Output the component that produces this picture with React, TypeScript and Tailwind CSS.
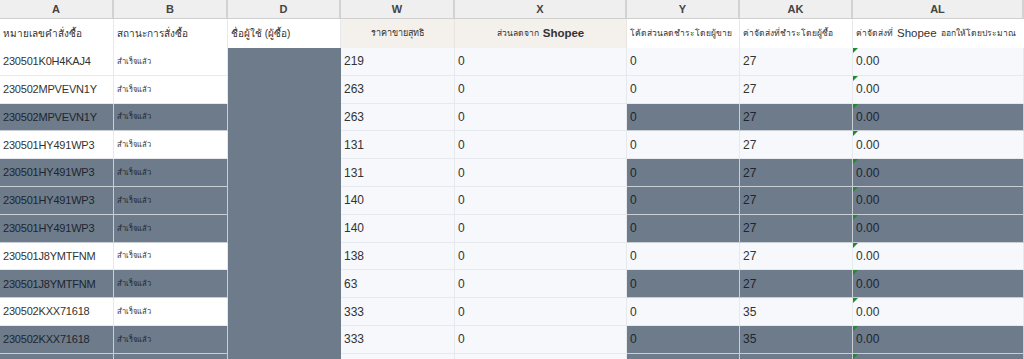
import React from "react";

type Row = {
  id: string;
  price: string;
  ship: string;
  dark: boolean;
};

const ROWS: Row[] = [
  { id: "230501K0H4KAJ4", price: "219", ship: "27", dark: false },
  { id: "230502MPVEVN1Y", price: "263", ship: "27", dark: false },
  { id: "230502MPVEVN1Y", price: "263", ship: "27", dark: true },
  { id: "230501HY491WP3", price: "131", ship: "27", dark: false },
  { id: "230501HY491WP3", price: "131", ship: "27", dark: true },
  { id: "230501HY491WP3", price: "140", ship: "27", dark: true },
  { id: "230501HY491WP3", price: "140", ship: "27", dark: true },
  { id: "230501J8YMTFNM", price: "138", ship: "27", dark: false },
  { id: "230501J8YMTFNM", price: "63", ship: "27", dark: true },
  { id: "230502KXX71618", price: "333", ship: "35", dark: false },
  { id: "230502KXX71618", price: "333", ship: "35", dark: true },
  { id: "", price: "", ship: "", dark: true },
];

const COLS = ["A", "B", "D", "W", "X", "Y", "AK", "AL"];

const grid =
  "grid grid-cols-[114px_114px_113px_114px_172px_113px_113px_171px]";

function Cell({
  dark,
  children,
  className = "",
  light = "bg-[#f6f8fb]",
  flag = false,
}: {
  dark: boolean;
  children?: React.ReactNode;
  className?: string;
  light?: string;
  flag?: boolean;
}) {
  return (
    <div
      className={[
        "relative flex h-[27.8px] items-center overflow-hidden whitespace-nowrap pl-[3px]",
        dark
          ? "border-r border-b border-[#c9ced4] bg-[#6d7b8a] text-[#1e2530]"
          : `border-r border-b border-[#e6eaee] text-[#333] ${light}`,
        className,
      ].join(" ")}
    >
      {flag ? (
        <span className="absolute top-0 left-0 h-0 w-0 border-t-[5px] border-r-[5px] border-t-[#1f8a2e] border-r-transparent" />
      ) : null}
      {children}
    </div>
  );
}

export default function App() {
  return (
    <div className="h-[359px] w-[1024px] overflow-hidden bg-white font-['Liberation_Sans','Noto_Sans',sans-serif]">
      <div className={`${grid} h-[19px] border-b border-[#cfcfcf] bg-[#efefef]`}>
        {COLS.map((c) => (
          <div
            key={c}
            className="flex items-center justify-center border-r-2 border-double border-[#d2d2d2] text-[11px] font-semibold text-[#444]"
          >
            {c}
          </div>
        ))}
      </div>
      <div className={`${grid} h-[29px] text-[10px] text-[#333]`}>
        <div className="flex items-center border-r border-[#e6eaee] bg-white pl-[3px]">
          หมายเลขคำสั่งซื้อ
        </div>
        <div className="flex items-center border-r border-[#e6eaee] bg-white pl-[3px]">
          สถานะการสั่งซื้อ
        </div>
        <div className="flex items-center border-r border-[#e6eaee] bg-white pl-[3px]">
          ชื่อผู้ใช้ (ผู้ซื้อ)
        </div>
        <div className="flex items-center justify-center border-r border-[#e9e4de] bg-[#f4f0ec] text-[9px]">
          ราคาขายสุทธิ
        </div>
        <div className="flex items-center justify-center gap-1 border-r border-[#e9e4de] bg-[#f4f0ec] text-[8.5px]">
          ส่วนลดจาก <span className="text-[11.5px] font-bold">Shopee</span>
        </div>
        <div className="flex items-center whitespace-nowrap border-r border-[#e6eaee] bg-white pl-[3px] text-[8.5px]">
          โค้ดส่วนลดชำระโดยผู้ขาย
        </div>
        <div className="flex items-center whitespace-nowrap border-r border-[#e6eaee] bg-white pl-[3px] text-[8.5px]">
          ค่าจัดส่งที่ชำระโดยผู้ซื้อ
        </div>
        <div className="flex items-center gap-1 whitespace-nowrap bg-white pl-[3px] text-[8.5px]">
          ค่าจัดส่งที่ <span className="text-[11.5px]">Shopee</span> ออกให้โดยประมาณ
        </div>
      </div>
      <div className="flex">
        <div className="flex w-[228px] flex-col">
          {ROWS.map((r, i) => (
            <div key={i} className="grid grid-cols-[114px_114px]">
              <Cell dark={r.dark} light="bg-white" className="text-[11px] tracking-[-0.2px]">
                {r.id}
              </Cell>
              <Cell dark={r.dark} light="bg-white" className="text-[7.5px]">
                {r.id ? "สำเร็จแล้ว" : ""}
              </Cell>
            </div>
          ))}
        </div>
        <div className="h-[340px] w-[113px] bg-[#6d7b8a]" />
        <div className="flex flex-1 flex-col">
          {ROWS.map((r, i) => (
            <div
              key={i}
              className="grid grid-cols-[114px_172px_113px_113px_171px] text-[12px]"
            >
              <Cell dark={false}>{r.price}</Cell>
              <Cell dark={false}>{r.id ? "0" : ""}</Cell>
              <Cell dark={r.dark}>{r.id ? "0" : ""}</Cell>
              <Cell dark={r.dark}>{r.ship}</Cell>
              <Cell dark={r.dark} flag>
                {r.id ? "0.00" : ""}
              </Cell>
            </div>
          ))}
        </div>
      </div>
    </div>
  );
}
